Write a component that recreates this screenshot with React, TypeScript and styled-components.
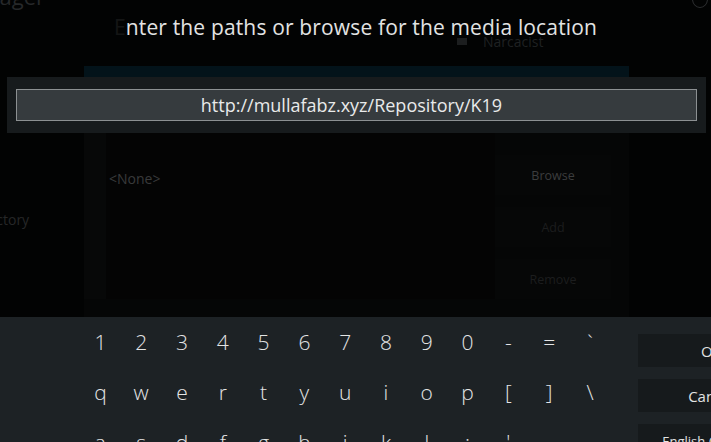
import React from 'react';
import styled, { createGlobalStyle } from 'styled-components';

const GlobalStyle = createGlobalStyle`
  html, body {
    margin: 0;
    padding: 0;
    background: #020303;
    overflow: hidden;
  }

  body {
    font-family: "Open Sans", "Noto Sans", sans-serif;
  }
`;

const Screen = styled.div`
  position: relative;
  width: 711px;
  height: 442px;
  overflow: hidden;
  background: #020303;
`;

/* dimmed source dialog behind the keyboard */
const Backdrop = styled.div`
  position: absolute;
  inset: 0;
  color: #2a2b2c;
`;

const PageTitle = styled.div`
  position: absolute;
  left: -46px;
  top: -19px;
  font-size: 22px;
  color: #26282a;
`;

const SideLabel = styled.div`
  position: absolute;
  left: -31px;
  top: 210px;
  font-size: 14px;
  color: #262728;
`;

const CornerRing = styled.div`
  position: absolute;
  left: 692px;
  top: -10px;
  width: 14px;
  height: 16px;
  border: 1px solid #2c2e30;
  border-radius: 50%;
`;

const SourceItem = styled.div`
  position: absolute;
  left: 457px;
  top: 32px;
  display: flex;
  align-items: center;
  gap: 16px;
  font-size: 14px;
  color: #1f2122;

  &::before {
    content: '';
    width: 10px;
    height: 7px;
    background: #1c1e1f;
  }
`;

const Dialog = styled.div`
  position: absolute;
  left: 84px;
  top: 66px;
  width: 545px;
  height: 251px;
  display: grid;
  grid-template-rows: 11px 1fr;
  background: #050606;
`;

const DialogHeader = styled.div`
  background: #03131a;
`;

const DialogBody = styled.div`
  display: grid;
  grid-template-columns: 22px 1fr 134px;
  padding-bottom: 22px;
`;

const Gutter = styled.div`
  background: #070808;
`;

const SourceList = styled.div`
  background: #040404;
  padding: 92px 0 0 3px;
  font-size: 14px;
  color: #393a3b;
`;

const SideButtons = styled.div`
  display: flex;
  flex-direction: column;
  gap: 12px;
  padding: 78px 18px 0 0;
`;

const GhostButton = styled.div<{ $tone: string }>`
  height: 40px;
  display: flex;
  align-items: center;
  justify-content: center;
  background: #060707;
  font-size: 12.5px;
  color: ${({ $tone }) => $tone};
`;

/* keyboard overlay */
const Overlay = styled.div`
  position: relative;
  height: 100%;
  display: flex;
  flex-direction: column;
`;

const Heading = styled.div`
  height: 77px;
  display: flex;
  justify-content: center;
  padding-top: 13px;
  box-sizing: border-box;
  font-size: 21px;
  letter-spacing: 0.15px;
  color: #e2e3e3;
`;

const FadedLetter = styled.span`
  opacity: 0.08;
`;

const InputBar = styled.div`
  margin: 0 5px 0 7px;
  padding: 12px 9px;
  background: #171b1d;
`;

const InputField = styled.div`
  height: 30px;
  display: flex;
  align-items: center;
  justify-content: center;
  padding-right: 10px;
  border: 1px solid #8c9092;
  background: #363b3e;
  font-size: 18px;
  color: #e9eaea;
`;

const Spacer = styled.div`
  flex: 1;
`;

const Keyboard = styled.div`
  height: 125px;
  display: flex;
  background: #1d2225;
  overflow: hidden;
`;

const KeyGrid = styled.div`
  margin-left: 80px;
  display: grid;
  grid-template-columns: repeat(13, 40.8px);
  grid-auto-rows: 50px;
`;

const Key = styled.div`
  display: flex;
  align-items: center;
  justify-content: center;
  font-size: 21px;
  font-weight: 300;
  color: #e4e5e5;
`;

const ActionColumn = styled.div`
  margin-left: 28px;
  padding-top: 17px;
  display: flex;
  flex-direction: column;
  gap: 12px;
`;

const ActionButton = styled.div<{ $size?: number }>`
  width: 146px;
  height: 33px;
  flex-shrink: 0;
  display: flex;
  align-items: center;
  justify-content: center;
  background: #161a1c;
  font-size: ${({ $size }) => $size ?? 15}px;
  color: #e2e3e3;
`;

const rows = [
  ['1', '2', '3', '4', '5', '6', '7', '8', '9', '0', '-', '=', '`'],
  ['q', 'w', 'e', 'r', 't', 'y', 'u', 'i', 'o', 'p', '[', ']', '\\'],
  ['a', 's', 'd', 'f', 'g', 'h', 'j', 'k', 'l', ';', "'", '', ''],
];

const App = () => (
  <Screen>
    <GlobalStyle />
    <Backdrop>
      <PageTitle>Manager</PageTitle>
      <SideLabel>Directory</SideLabel>
      <CornerRing />
      <SourceItem>Narcacist</SourceItem>
      <Dialog>
        <DialogHeader />
        <DialogBody>
          <Gutter />
          <SourceList>&lt;None&gt;</SourceList>
          <SideButtons>
            <GhostButton $tone="#3c3d3e">Browse</GhostButton>
            <GhostButton $tone="#1c1d1e">Add</GhostButton>
            <GhostButton $tone="#1c1d1e">Remove</GhostButton>
          </SideButtons>
        </DialogBody>
      </Dialog>
    </Backdrop>

    <Overlay>
      <Heading>
        <span>
          <FadedLetter>E</FadedLetter>nter the paths or browse for the media location
        </span>
      </Heading>
      <InputBar>
        <InputField>http://mullafabz.xyz/Repository/K19</InputField>
      </InputBar>
      <Spacer />
      <Keyboard>
        <KeyGrid>
          {rows.flat().map((k, i) => (
            <Key key={i}>{k}</Key>
          ))}
        </KeyGrid>
        <ActionColumn>
          <ActionButton>OK</ActionButton>
          <ActionButton>Cancel</ActionButton>
          <ActionButton $size={13}>English QWERTY</ActionButton>
        </ActionColumn>
      </Keyboard>
    </Overlay>
  </Screen>
);

export default App;
